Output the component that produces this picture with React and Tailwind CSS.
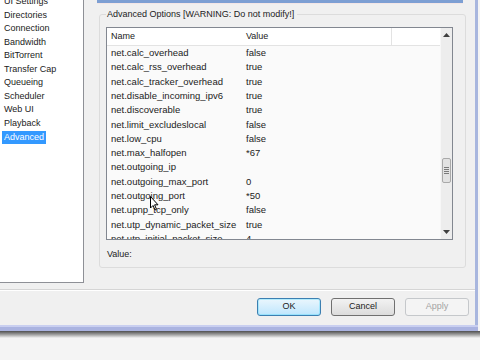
import React from 'react';

const categories = [
  'UI Settings',
  'Directories',
  'Connection',
  'Bandwidth',
  'BitTorrent',
  'Transfer Cap',
  'Queueing',
  'Scheduler',
  'Web UI',
  'Playback',
  'Advanced'
];

const options = [
  ['net.calc_overhead', 'false'],
  ['net.calc_rss_overhead', 'true'],
  ['net.calc_tracker_overhead', 'true'],
  ['net.disable_incoming_ipv6', 'true'],
  ['net.discoverable', 'true'],
  ['net.limit_excludeslocal', 'false'],
  ['net.low_cpu', 'false'],
  ['net.max_halfopen', '*67'],
  ['net.outgoing_ip', ''],
  ['net.outgoing_max_port', '0'],
  ['net.outgoing_port', '*50'],
  ['net.upnp_tcp_only', 'false'],
  ['net.utp_dynamic_packet_size', 'true'],
  ['net.utp_initial_packet_size', '4']
];

const Sidebar = () => (
  <div className="w-[84px] h-[283px] bg-white border-r border-b border-[#8e9096] overflow-hidden">
    <ul className="-mt-[5px]">
      {categories.map((c) => (
        <li key={c} className="h-[13.55px] flex items-center pl-[2px]">
          {c === 'Advanced' ? (
            <span className="px-[2px] h-[13px] leading-[13px] bg-[#3399ff] text-white">{c}</span>
          ) : (
            <span className="px-[2px]">{c}</span>
          )}
        </li>
      ))}
    </ul>
  </div>
);

const ScrollBar = () => (
  <div className="w-[12px] flex flex-col bg-[#ededed] border-l border-[#f7f7f7]">
    <div className="h-[14px] flex items-center justify-center">
      <svg width="7" height="4" viewBox="0 0 7 4"><path d="M0 4 L3.5 0 L7 4 Z" fill="#3f3f3f" /></svg>
    </div>
    <div className="flex-1 flex flex-col">
      <div className="h-[116px]" />
      <div className="h-[25px] mx-[1px] rounded-[2px] border border-[#a9a9a9] bg-[#e2e2e2] flex flex-col items-center justify-center gap-[1px]">
        <div className="w-[5px] h-px bg-[#7a7a7a]" />
        <div className="w-[5px] h-px bg-[#7a7a7a]" />
        <div className="w-[5px] h-px bg-[#7a7a7a]" />
        <div className="w-[5px] h-px bg-[#7a7a7a]" />
      </div>
    </div>
    <div className="h-[14px] flex items-center justify-center">
      <svg width="7" height="4" viewBox="0 0 7 4"><path d="M0 0 L3.5 4 L7 0 Z" fill="#3f3f3f" /></svg>
    </div>
  </div>
);

const OptionsTable = () => (
  <div className="w-[347px] h-[213px] border border-[#828790] bg-[#fafafa] flex overflow-hidden">
    <div className="flex-1 flex flex-col overflow-hidden">
      <div className="h-[18px] shrink-0 flex bg-white border-b border-[#e3e3e3]">
        <div className="w-[134px] pl-[4px] flex items-center">Name</div>
        <div className="w-[151px] pl-[5px] flex items-center border-r border-[#e3e3e3]">Value</div>
        <div className="flex-1" />
      </div>
      {options.map(([name, value]) => (
        <div key={name} className="h-[14.3px] shrink-0 flex items-center text-[9.5px]">
          <div className="w-[134px] pl-[4px] whitespace-nowrap">{name}</div>
          <div className="pl-[5px]">{value}</div>
        </div>
      ))}
    </div>
    <ScrollBar />
  </div>
);

const Cursor = () => (
  <svg className="absolute left-[150px] top-[196px]" width="10" height="16" viewBox="0 0 10 16">
    <path d="M0.5 0.5 L0.5 12 L3 9.5 L5 14 L6.5 13.3 L4.6 8.8 L8 8.8 Z" fill="#fff" stroke="#000" strokeWidth="1" />
  </svg>
);

export default function App() {
  return (
    <div className="w-[480px] h-[360px] bg-[#f4f4f4] overflow-hidden relative font-['Liberation_Sans',sans-serif] text-[9px] text-[#222]">
      <div className="flex h-[325px]">
        <div className="w-[475px] bg-[#f0f0f0] flex flex-col">
          <div className="h-[290px] flex border-b border-[#d5d5d5]">
            <Sidebar />
            <div className="flex-1 flex flex-col">
              <div className="ml-[13px] w-[366px] h-[3px] bg-[#7d9fd3]" />
              <div className="ml-[13px] w-[366px] h-px bg-[#f3e6e6]" />
              <div className="ml-[15px] mt-[10px] w-[367px] h-[254px] border border-[#dcdcdc] rounded-[3px] pl-[6px] flex flex-col">
                <div className="-mt-[7px] h-[12px] leading-[12px] w-fit pl-[1px] pr-[3px] bg-[#f0f0f0]">
                  Advanced Options [WARNING: Do not modify!]
                </div>
                <div className="mt-[7px]">
                  <OptionsTable />
                </div>
                <div className="mt-[8px] pl-[1px] h-[12px] leading-[12px]">Value:</div>
              </div>
            </div>
          </div>
          <div className="flex-1 border-t border-white flex justify-end items-start gap-[10px] pr-[6px] pt-[7px]">
            <button className="w-[64px] h-[18px] rounded-[3px] border border-[#3c7fb1] bg-gradient-to-b from-[#eaf6fd] to-[#bee6fd] shadow-[inset_0_0_0_1px_#48d8fb55]">OK</button>
            <button className="w-[64px] h-[18px] rounded-[3px] border border-[#707070] bg-gradient-to-b from-[#f2f2f2] to-[#dcdcdc]">Cancel</button>
            <button className="w-[64px] h-[18px] rounded-[3px] border border-[#c5c8cb] bg-[#f4f4f4] text-[#a3a3a3]">Apply</button>
          </div>
        </div>
        <div className="w-[3px] bg-[#a8b6de]" />
        <div className="flex-1 bg-[#f4f4f4]" />
      </div>
      <div className="h-[2px] w-[478px] bg-[#c9cff0]" />
      <div className="h-[4px] w-[478px] bg-[#aab3e0]" />
      <div className="h-[7px] bg-gradient-to-b from-[#505050] to-[#f4f4f4]" />
      <Cursor />
    </div>
  );
}
